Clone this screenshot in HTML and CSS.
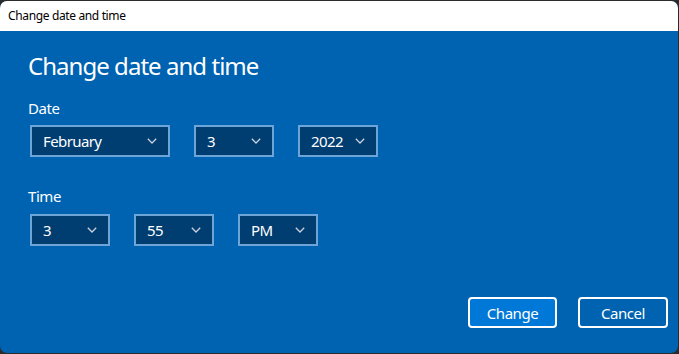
FILE: index.html
```html
<!DOCTYPE html>
<html lang="en">
<head>
<meta charset="utf-8">
<title>Change date and time</title>
<link rel="stylesheet" href="styles.css">
</head>
<body>
<div class="window">
  <div class="titlebar">Change date and time</div>
  <div class="content">
    <h1 class="heading">Change date and time</h1>
    <div class="label label-date">Date</div>
    <div class="row">
      <div class="select w140"><span>February</span><svg class="chev" width="10" height="6" viewBox="0 0 10 6"><path d="M0.8 0.8 L5 5 L9.2 0.8" /></svg></div>
      <div class="select w80"><span>3</span><svg class="chev" width="10" height="6" viewBox="0 0 10 6"><path d="M0.8 0.8 L5 5 L9.2 0.8" /></svg></div>
      <div class="select w80"><span>2022</span><svg class="chev" width="10" height="6" viewBox="0 0 10 6"><path d="M0.8 0.8 L5 5 L9.2 0.8" /></svg></div>
    </div>
    <div class="label label-time">Time</div>
    <div class="row">
      <div class="select w80"><span>3</span><svg class="chev" width="10" height="6" viewBox="0 0 10 6"><path d="M0.8 0.8 L5 5 L9.2 0.8" /></svg></div>
      <div class="select w80"><span>55</span><svg class="chev" width="10" height="6" viewBox="0 0 10 6"><path d="M0.8 0.8 L5 5 L9.2 0.8" /></svg></div>
      <div class="select w80"><span>PM</span><svg class="chev" width="10" height="6" viewBox="0 0 10 6"><path d="M0.8 0.8 L5 5 L9.2 0.8" /></svg></div>
    </div>
    <div class="actions">
      <button class="btn btn-primary">Change</button>
      <button class="btn btn-secondary">Cancel</button>
    </div>
  </div>
</div>
</body>
</html>
```
FILE: styles.css
```css
html, body {
  margin: 0;
  padding: 0;
}
body {
  background: #2b2b2b;
  width: 679px;
  height: 354px;
  overflow: hidden;
  font-family: "Noto Sans", "Open Sans", sans-serif;
}
.window {
  margin-top: 1px;
  width: 678px;
  height: 352px;
  border-radius: 7px;
  overflow: hidden;
  background: #0063b1;
  display: flex;
  flex-direction: column;
}
.titlebar {
  height: 30px;
  line-height: 30px;
  background: #ffffff;
  color: #000000;
  font-size: 12px;
  letter-spacing: -0.03em;
  padding-left: 8px;
  flex: none;
}
.content {
  flex: 1;
  display: flex;
  flex-direction: column;
  padding: 19px 10px 25px 28px;
  color: #ffffff;
}
.heading {
  margin: 0;
  font-size: 24px;
  line-height: 32px;
  font-weight: 400;
  letter-spacing: -0.04em;
}
.label {
  font-size: 15px;
  line-height: 20px;
  letter-spacing: -0.03em;
}
.label-date {
  margin-top: 16px;
  margin-bottom: 7px;
}
.label-time {
  margin-top: 29px;
  margin-bottom: 8px;
}
.row {
  display: flex;
  gap: 24px;
  padding-left: 2px;
}
.select {
  box-sizing: border-box;
  height: 32px;
  border: 2px solid #6ea5d8;
  background: #003d70;
  display: flex;
  align-items: center;
  justify-content: space-between;
  padding: 0 11px 0 11px;
  font-size: 15px;
  letter-spacing: -0.04em;
  color: #ffffff;
}
.w140 { width: 140px; }
.w80 { width: 80px; }
.chev {
  display: block;
  fill: none;
  stroke: #c9d2de;
  stroke-width: 1.3;
}
.actions {
  margin-top: auto;
  display: flex;
  justify-content: flex-end;
  gap: 21px;
}
.btn {
  box-sizing: border-box;
  height: 31px;
  border: 2px solid #ffffff;
  border-radius: 4px;
  color: #ffffff;
  font-family: inherit;
  font-size: 15px;
  letter-spacing: -0.03em;
  padding: 0;
}
.btn-primary {
  width: 89px;
  background: #0078d7;
}
.btn-secondary {
  width: 90px;
  background: #0063b1;
}
```
